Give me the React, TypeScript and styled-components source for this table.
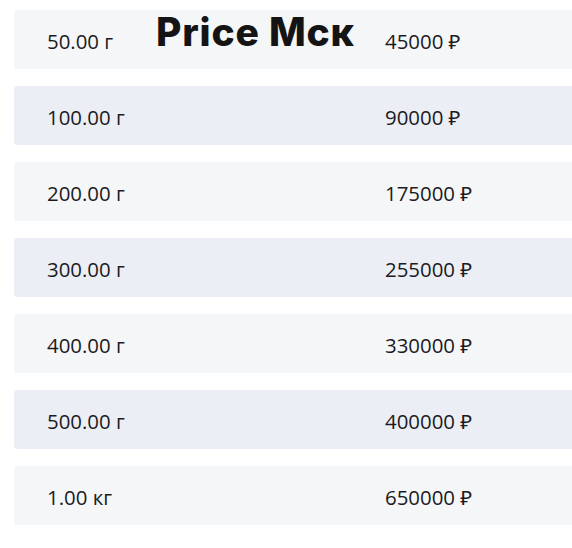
import React from "react";
import styled, { createGlobalStyle } from "styled-components";

const Global = createGlobalStyle`
  html, body { margin: 0; padding: 0; background: #ffffff; }
  body { font-family: "Open Sans", "Noto Sans", sans-serif; overflow: hidden; }
`;

const Page = styled.div`
  position: relative;
  width: 572px;
  height: 548px;
  padding: 10px 0 0 14px;
  box-sizing: border-box;
`;

const List = styled.div`
  display: flex;
  flex-direction: column;
  gap: 17px;
`;

const Row = styled.div<{ $alt: boolean }>`
  display: grid;
  grid-template-columns: 338px 1fr;
  align-items: center;
  height: 59px;
  padding-left: 33px;
  padding-top: 3px;
  box-sizing: border-box;
  border-radius: 3px 0 0 3px;
  background: ${(p) => (p.$alt ? "#ebeef5" : "#f5f6f8")};
`;

const Cell = styled.div`
  font-size: 20.4px;
  line-height: 24px;
  color: #1b1b1d;
  white-space: nowrap;
`;

const Title = styled.div`
  position: absolute;
  left: 156px;
  top: 9px;
  font-family: Inter, Roboto, "Liberation Sans", sans-serif;
  font-weight: 800;
  font-size: 39px;
  line-height: 46px;
  color: #141414;
  letter-spacing: 0.8px;
`;

const rows: [string, string][] = [
  ["50.00 г", "45000 ₽"],
  ["100.00 г", "90000 ₽"],
  ["200.00 г", "175000 ₽"],
  ["300.00 г", "255000 ₽"],
  ["400.00 г", "330000 ₽"],
  ["500.00 г", "400000 ₽"],
  ["1.00 кг", "650000 ₽"],
];

export default function App() {
  return (
    <>
      <Global />
      <Page>
        <List>
          {rows.map(([w, p], i) => (
            <Row key={i} $alt={i % 2 === 1}>
              <Cell>{w}</Cell>
              <Cell>{p}</Cell>
            </Row>
          ))}
        </List>
        <Title>Price Мск</Title>
      </Page>
    </>
  );
}
